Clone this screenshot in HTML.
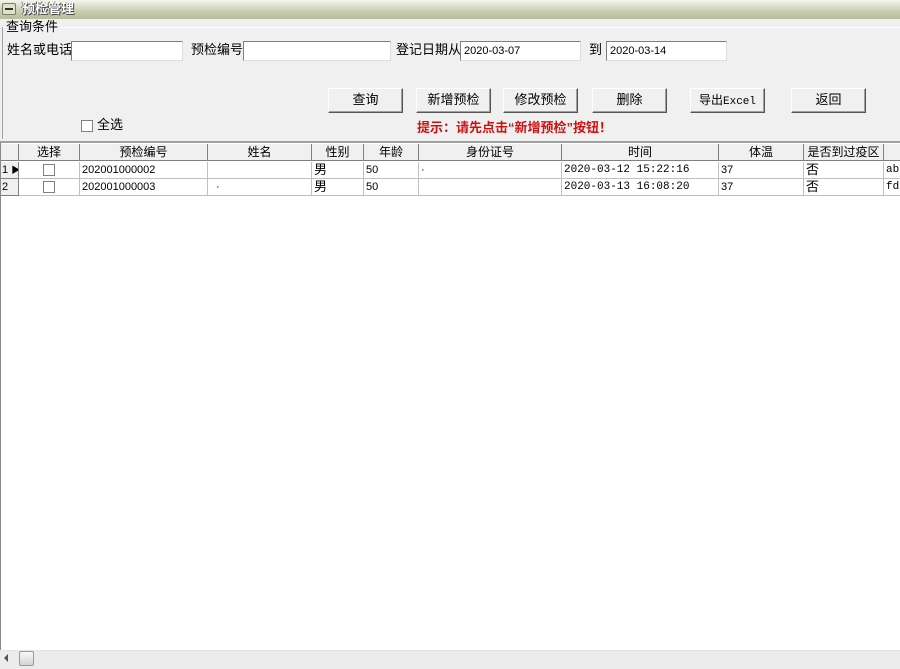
<!DOCTYPE html><html><head><meta charset="utf-8"><style>
*{margin:0;padding:0;box-sizing:border-box}
body{width:900px;height:669px;background:#f0f0f0;font:12px "Liberation Sans","Noto Sans CJK SC",sans-serif;position:relative;overflow:hidden;color:#000}
.a{position:absolute;line-height:1.2}
.t{left:0;top:0;width:900px;height:19px;background:linear-gradient(#f4f5ec,#c9cdb0 60%,#b8bd9c);}
.inp{background:#fff;border:1px solid #7f7f7f;border-right-color:#ddd;border-bottom-color:#ddd;height:20px;padding:3px 3px;font-size:11px;line-height:12px}
.btn{height:25px;border:1px solid #fff;border-right-color:#555;border-bottom-color:#555;background:#f0f0f0;box-shadow:inset -1px -1px #a0a0a0;text-align:center;line-height:22px;font-size:13px}
.grid{left:0;top:141px;width:900px;height:510px;background:#fff;border-left:1px solid #888;border-top:2px solid #a0a0a0}
.c{position:absolute;border-right:1px solid #c0c0c0;border-bottom:1px solid #c0c0c0;height:17px;line-height:16px;padding-left:2px;font-size:11px;white-space:nowrap;overflow:hidden}
.h{background:#f0f0f0;border-right:1px solid #808080;border-bottom:1px solid #808080;text-align:center;font-size:12px;padding:0}
.cb{position:absolute;width:12px;height:12px;border:1px solid #808080;background:#fff;left:24px;top:2px}
</style></head><body>
<div class="a t"></div>
<div class="a" style="left:2px;top:3px;width:14px;height:12px;background:#dfe3cb;border:1px solid #7b805f;border-radius:2px"><div style="margin:4px 2px;height:2px;background:#333"></div></div>
<div class="a" style="left:22px;top:1px;font-size:13px;font-weight:bold;color:#fff;text-shadow:1px 1px 0 #444,-1px 0 0 #555">预检管理</div>
<div class="a" style="left:2px;top:27px;width:898px;height:1px;background:#a0a0a0;border-bottom:1px solid #fff"></div>
<div class="a" style="left:2px;top:27px;width:1px;height:112px;background:#a0a0a0"></div>
<div class="a" style="left:6px;top:19px;background:#f0f0f0;font-size:13px;padding-right:2px">查询条件</div>
<div class="a" style="left:7px;top:42px;font-size:13px">姓名或电话</div>
<div class="a inp" style="left:71px;top:41px;width:112px"></div>
<div class="a" style="left:191px;top:42px;font-size:13px">预检编号</div>
<div class="a inp" style="left:243px;top:41px;width:148px"></div>
<div class="a" style="left:396px;top:42px;font-size:13px">登记日期从</div>
<div class="a inp" style="left:460px;top:41px;width:121px">2020-03-07</div>
<div class="a" style="left:589px;top:42px;font-size:13px">到</div>
<div class="a inp" style="left:606px;top:41px;width:121px">2020-03-14</div>
<div class="a btn" style="left:328px;top:88px;width:75px">查询</div>
<div class="a btn" style="left:416px;top:88px;width:75px">新增预检</div>
<div class="a btn" style="left:503px;top:88px;width:75px">修改预检</div>
<div class="a btn" style="left:592px;top:88px;width:75px">删除</div>
<div class="a btn" style="left:690px;top:88px;width:75px;font-size:12px;line-height:22px">导出<span style="font-family:'Liberation Mono';font-size:11px">Excel</span></div>
<div class="a btn" style="left:791px;top:88px;width:75px">返回</div>
<div class="a" style="left:81px;top:120px;width:12px;height:12px;border:1px solid #808080;background:#fff"></div>
<div class="a" style="left:97px;top:117px;font-size:13px">全选</div>
<div class="a" style="left:417px;top:120px;font-size:13px;font-weight:bold;color:#d01010">提示：请先点击“新增预检”按钮！</div>
<div class="a grid">
<div class="c h" style="left:0;top:1px;width:18px"></div>
<div class="c h" style="left:18px;top:1px;width:61px">选择</div>
<div class="c h" style="left:79px;top:1px;width:128px">预检编号</div>
<div class="c h" style="left:207px;top:1px;width:104px">姓名</div>
<div class="c h" style="left:311px;top:1px;width:52px">性别</div>
<div class="c h" style="left:363px;top:1px;width:55px">年龄</div>
<div class="c h" style="left:418px;top:1px;width:143px">身份证号</div>
<div class="c h" style="left:561px;top:1px;width:157px">时间</div>
<div class="c h" style="left:718px;top:1px;width:85px">体温</div>
<div class="c h" style="left:803px;top:1px;width:80px">是否到过疫区</div>
<div class="c h" style="left:883px;top:1px;width:20px"></div>

<div class="c h" style="left:0;top:19px;width:18px;text-align:left;padding-left:1px;font-size:11px">1 <span style="font-size:9px">▶</span></div>
<div class="c" style="left:18px;top:19px;width:61px"><div class="cb"></div></div>
<div class="c" style="left:79px;top:19px;width:128px">202001000002</div>
<div class="c" style="left:207px;top:19px;width:104px"></div>
<div class="c" style="left:311px;top:19px;width:52px;font-size:13px">男</div>
<div class="c" style="left:363px;top:19px;width:55px">50</div>
<div class="c" style="left:418px;top:19px;width:143px">·</div>
<div class="c" style="left:561px;top:19px;width:157px;font-family:'Liberation Mono';font-size:11px">2020-03-12 15:22:16</div>
<div class="c" style="left:718px;top:19px;width:85px">37</div>
<div class="c" style="left:803px;top:19px;width:80px;font-size:13px">否</div>
<div class="c" style="left:883px;top:19px;width:20px;font-family:'Liberation Mono'">abc</div>

<div class="c h" style="left:0;top:36px;width:18px;text-align:left;padding-left:1px;font-size:11px">2</div>
<div class="c" style="left:18px;top:36px;width:61px"><div class="cb"></div></div>
<div class="c" style="left:79px;top:36px;width:128px">202001000003</div>
<div class="c" style="left:207px;top:36px;width:104px;padding-left:8px">·</div>
<div class="c" style="left:311px;top:36px;width:52px;font-size:13px">男</div>
<div class="c" style="left:363px;top:36px;width:55px">50</div>
<div class="c" style="left:418px;top:36px;width:143px"></div>
<div class="c" style="left:561px;top:36px;width:157px;font-family:'Liberation Mono';font-size:11px">2020-03-13 16:08:20</div>
<div class="c" style="left:718px;top:36px;width:85px">37</div>
<div class="c" style="left:803px;top:36px;width:80px;font-size:13px">否</div>
<div class="c" style="left:883px;top:36px;width:20px;font-family:'Liberation Mono'">fde</div>
</div>
<div class="a" style="left:0;top:650px;width:900px;height:19px;background:#ececec;border-top:1px solid #e4e4e4"></div>
<div class="a" style="left:4px;top:654px;width:0;height:0;border-top:4px solid transparent;border-bottom:4px solid transparent;border-right:4px solid #555"></div>
<div class="a" style="left:19px;top:651px;width:15px;height:15px;border:1px solid #999;border-radius:2px;background:linear-gradient(#f8f8f8,#d4d4d4)"></div>
</body></html>
